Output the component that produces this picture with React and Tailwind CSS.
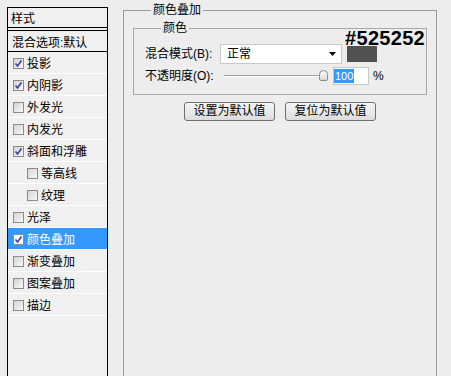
import React from "react";

const layers = [
  { label: "投影", checked: true },
  { label: "内阴影", checked: true },
  { label: "外发光" },
  { label: "内发光" },
  { label: "斜面和浮雕", checked: true },
  { label: "等高线", indent: true },
  { label: "纹理", indent: true },
  { label: "光泽" },
  { label: "颜色叠加", checked: true, active: true },
  { label: "渐变叠加" },
  { label: "图案叠加" },
  { label: "描边" },
];

function Check({ checked, active }) {
  return (
    <span
      className={`flex h-[11px] w-[11px] shrink-0 items-center justify-center border border-[#8c8c8c] ${
        active ? "bg-white" : "bg-gradient-to-br from-[#d4d4d4] to-[#f8f8f8]"
      }`}
    >
      {checked && (
        <svg width="9" height="9" viewBox="0 0 9 9">
          <path d="M1.5 4.5 L3.5 7 L7.5 1.5" fill="none" stroke="#3c3c9c" strokeWidth="1.6" />
        </svg>
      )}
    </span>
  );
}

export default function App() {
  return (
    <div
      className="flex h-[376px] w-[451px] overflow-hidden bg-[#ededed] text-[12px] text-black"
      style={{ fontFamily: '"Liberation Sans", "Noto Sans CJK SC", sans-serif' }}
    >
      {/* left: style list */}
      <div className="ml-[7px] mt-[7px] h-[400px] w-[101px] shrink-0 border border-black bg-[#f0f0f0]">
        <div className="flex h-[20px] items-center border-b border-black pl-[3px] pt-[2px]">样式</div>
        <div className="h-[2px] bg-[#ededed]" />
        <div className="flex h-[22px] items-center border-y border-black pl-[4px] pt-[3px]">混合选项:默认</div>
        {layers.map((l) => (
          <div
            key={l.label}
            className={`flex h-[22px] items-center gap-[3px] border-b border-white pt-[2px] ${
              l.indent ? "pl-[19px]" : "pl-[5px]"
            } ${l.active ? "bg-[#3399ff] text-white" : ""}`}
          >
            <Check checked={l.checked} active={l.active} />
            <span>{l.label}</span>
          </div>
        ))}
      </div>

      {/* right: colour overlay settings */}
      <fieldset className="ml-[15px] mt-[2px] h-[420px] w-[314px] shrink-0 border border-[#9a9a9a] px-[9px]">
        <legend className="ml-[18px] px-[2px] leading-[16px]">颜色叠加</legend>

        <fieldset className="relative mt-[2px] h-[75px] border border-[#a8a8a8] pl-[11px]">
          <legend className="ml-[16px] px-[2px] leading-[16px]">颜色</legend>
          <span className="absolute right-[1px] top-[-8px] text-[20px] font-bold leading-[20px] tracking-[0.3px]">
            #525252
          </span>

          <div className="mt-[8px] flex items-center">
            <span className="w-[75px]">混合模式(B):</span>
            <div className="flex h-[20px] w-[122px] items-center justify-between border border-[#c8c8c8] bg-white pl-[6px] pr-[5px]">
              <span>正常</span>
              <svg width="7" height="4" viewBox="0 0 7 4">
                <path d="M0 0 H7 L3.5 4 Z" fill="#000" />
              </svg>
            </div>
            <div className="ml-[5px] h-[16px] w-[30px] bg-[#525252]" />
          </div>

          <div className="mt-[3px] flex items-center">
            <span className="w-[79px]">不透明度(O):</span>
            <div className="relative h-[18px] w-[104px]">
              <div className="absolute left-0 right-[8px] top-[8px] h-[2px] border-t border-[#a0a0a0] border-b border-b-white" />
              <div className="absolute right-[0px] top-[3px] h-[11px] w-[9px] rounded-t-[5px] rounded-b-[2px] border border-[#8a8a8a] bg-gradient-to-b from-white to-[#d8d8d8]" />
            </div>
            <div className="ml-[5px] flex h-[18px] w-[36px] items-center border border-[#c8c8c8] bg-white">
              <span className="bg-[#3399ff] px-[1px] text-[11px] leading-[14px] text-white">100</span>
            </div>
            <span className="ml-[4px]">%</span>
          </div>
        </fieldset>

        <div className="mt-[7px] flex justify-center gap-[10px]">
          <button className="h-[19px] w-[91px] rounded-[3px] border border-[#707070] bg-gradient-to-b from-[#f6f6f6] to-[#dcdcdc] leading-[17px]">
            设置为默认值
          </button>
          <button className="h-[19px] w-[91px] rounded-[3px] border border-[#707070] bg-gradient-to-b from-[#f6f6f6] to-[#dcdcdc] leading-[17px]">
            复位为默认值
          </button>
        </div>
      </fieldset>
    </div>
  );
}
